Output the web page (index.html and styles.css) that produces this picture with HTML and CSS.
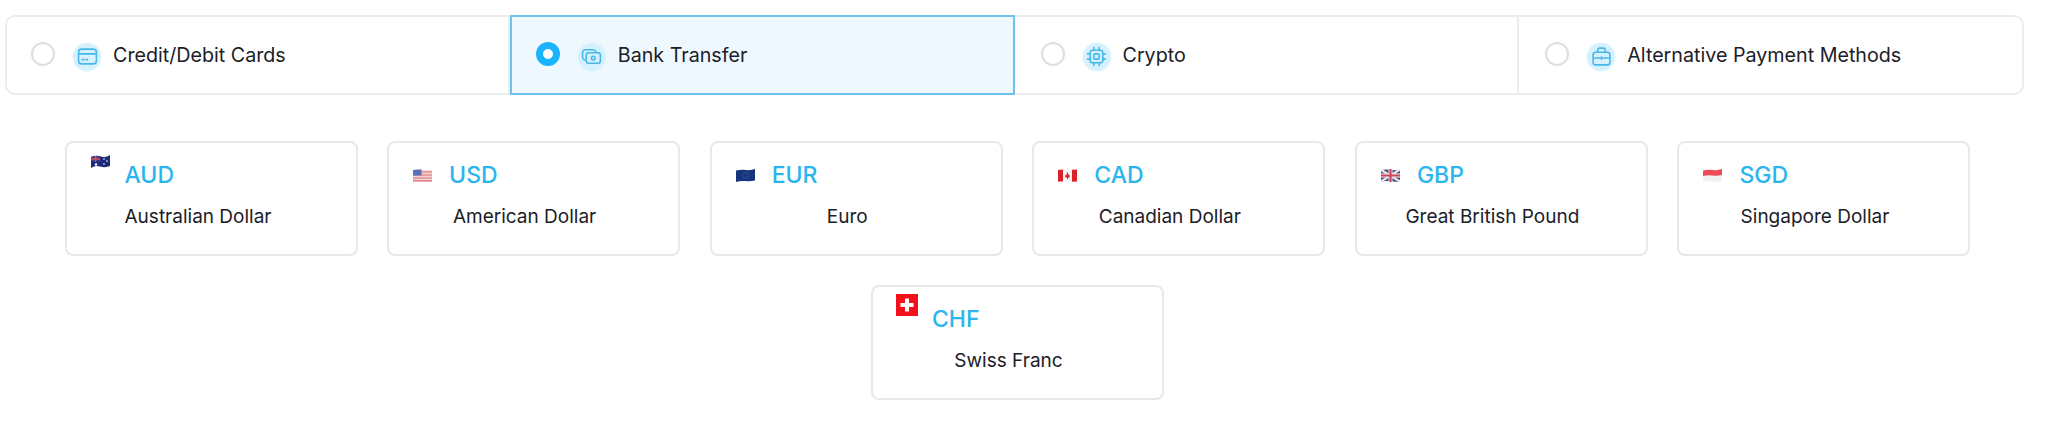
FILE: index.html
```html
<!DOCTYPE html>
<html lang="en">
<head>
  <meta charset="UTF-8">
  <meta name="viewport" content="width=device-width, initial-scale=1.0">
  <title>Payment Methods</title>
  <link rel="stylesheet" href="styles.css">
</head>
<body>
  <div class="tabs">
    <div class="tab">
      <span class="radio"></span>
      <span class="tab-icon">
        <svg viewBox="0 0 20 20" width="21" height="21"><rect x="1.500" y="3" width="17" height="14" rx="3"/><path d="M1.500 7.500h17"/><path d="M5 13h1.500M8.500 13H10"/></svg>
      </span>
      <span class="tab-label">Credit/Debit Cards</span>
    </div>
    <div class="tab tab-active">
      <span class="radio"></span>
      <span class="tab-icon">
        <svg viewBox="0 0 20 20" width="21" height="21"><path d="M3.500 13.500C2.300 13 1.500 12 1.500 10.800V6.500c0-1.700 1.300-3 3-3h7c1.300 0 2.400.8 2.800 2"/><rect x="5" y="6.500" width="13.500" height="10" rx="2.500"/><circle cx="11.700" cy="11.500" r="1.800"/></svg>
      </span>
      <span class="tab-label">Bank Transfer</span>
    </div>
    <div class="tab">
      <span class="radio"></span>
      <span class="tab-icon">
        <svg viewBox="0 0 20 20" width="21" height="21"><rect x="4" y="4" width="12" height="12" rx="2.500"/><rect x="7.500" y="7.500" width="5" height="5" rx="1"/><path d="M7.500 1.500V4M12.500 1.500V4M7.500 16v2.500M12.500 16v2.500M1.500 7.500H4M1.500 12.500H4M16 7.500h2.500M16 12.500h2.500"/></svg>
      </span>
      <span class="tab-label">Crypto</span>
    </div>
    <div class="tab">
      <span class="radio"></span>
      <span class="tab-icon">
        <svg viewBox="0 0 20 20" width="21" height="21"><rect x="2" y="6" width="16" height="12" rx="2.500"/><path d="M6.500 6V3.500c0-.8.7-1.500 1.500-1.500h4c.8 0 1.500.7 1.500 1.500V6"/><path d="M2 11.500h16M10 10.500v2"/></svg>
      </span>
      <span class="tab-label">Alternative Payment Methods</span>
    </div>
  </div>

  <div class="currencies">
    <div class="card card-aud">
      <div class="card-head">
        <span class="flag flag-top">
          <svg viewBox="0 0 19 13" width="19" height="13"><path d="M0 2Q5 0 10 1.500T19 0V11Q14 13 9 11.500T0 13Z" fill="#1b2a7a"/><path d="M0 2Q2.500 1 5 1L9 1.300V6.500H0Z" fill="#3a3f8c"/><path d="M0 4H9M4.500 1V6.500" stroke="#e34a55" stroke-width="1.500"/><circle cx="5" cy="9.500" r="1.200" fill="#fff"/><circle cx="13" cy="4" r=".8" fill="#fff"/><circle cx="16" cy="6" r=".8" fill="#fff"/><circle cx="13" cy="9" r=".8" fill="#fff"/></svg>
        </span>
        <span class="code">AUD</span>
      </div>
      <p class="name">Australian Dollar</p>
    </div>
    <div class="card">
      <div class="card-head">
        <span class="flag">
          <svg viewBox="0 0 19 13" width="19" height="13"><path d="M0 1Q5 0 10 .8T19 .5V12.500Q14 13 9 12.300T0 12.500Z" fill="#f3d5d5"/><path d="M0 3H19M0 6H19M0 9H19M0 11.800H19" stroke="#dd6a6e" stroke-width="1.200"/><path d="M0 1Q4 .3 8.500 .6V6.500H0Z" fill="#5a6fb5"/></svg>
        </span>
        <span class="code">USD</span>
      </div>
      <p class="name">American Dollar</p>
    </div>
    <div class="card">
      <div class="card-head">
        <span class="flag">
          <svg viewBox="0 0 19 13" width="19" height="13"><path d="M0 1.500Q5 .5 10 1T19 0V11.500Q14 12.500 9 12T0 13Z" fill="#16357f"/><circle cx="9.500" cy="6.500" r="3" fill="none" stroke="#33508f" stroke-width="1"/></svg>
        </span>
        <span class="code">EUR</span>
      </div>
      <p class="name">Euro</p>
    </div>
    <div class="card">
      <div class="card-head">
        <span class="flag">
          <svg viewBox="0 0 19 13" width="19" height="13"><path d="M0 1Q5 0 10 .8T19 .5V12.500Q14 13 9 12.300T0 12.500Z" fill="#f7f2f2"/><path d="M0 1L5 .4V12.500L0 12.500ZM14 .8L19 .5V12.500L14 12.800Z" fill="#d8232a"/><path d="M9.500 3L11 6.500 12 6 11.500 8.500H10V10H9V8.500H7.500L7 6 8 6.500Z" fill="#d8232a"/></svg>
        </span>
        <span class="code">CAD</span>
      </div>
      <p class="name">Canadian Dollar</p>
    </div>
    <div class="card">
      <div class="card-head">
        <span class="flag">
          <svg viewBox="0 0 19 13" width="19" height="13"><path d="M0 1Q5 0 10 .8T19 .5V12.500Q14 13 9 12.300T0 12.500Z" fill="#4a4f86"/><path d="M0 1L19 12.500M19 .5L0 12.500" stroke="#f2e6e8" stroke-width="2.200"/><path d="M9.500 0V13M0 6.500H19" stroke="#f2e6e8" stroke-width="4"/><path d="M9.500 0V13M0 6.500H19" stroke="#c9475a" stroke-width="2.200"/></svg>
        </span>
        <span class="code">GBP</span>
      </div>
      <p class="name">Great British Pound</p>
    </div>
    <div class="card">
      <div class="card-head">
        <span class="flag">
          <svg viewBox="0 0 19 13" width="19" height="13"><path d="M0 1.500Q5 .5 10 1T19 0V12Q14 13 9 12.500T0 13Z" fill="#f1f1f1"/><path d="M0 1.500Q5 .5 10 1T19 0V6Q14 7 9 6.500T0 7Z" fill="#ee4c55"/></svg>
        </span>
        <span class="code">SGD</span>
      </div>
      <p class="name">Singapore Dollar</p>
    </div>
    <div class="card">
      <div class="card-head">
        <span class="flag flag-top flag-chf">
          <svg viewBox="0 0 22 22" width="22" height="22"><rect width="22" height="22" fill="#f5111b"/><path d="M9 4.500h4V9h4.500v4H13v4.500H9V13H4.500V9H9Z" fill="#fff"/></svg>
        </span>
        <span class="code">CHF</span>
      </div>
      <p class="name">Swiss Franc</p>
    </div>
  </div>
</body>
</html>
```

FILE: styles.css
```css
* {
  margin: 0;
  padding: 0;
  box-sizing: border-box;
}

body {
  font-family: Inter, "Liberation Sans", sans-serif;
  background-color: #fff;
  color: #1b2027;
  padding: 15px 24px 0 5px;
  height: 424px;
  overflow: hidden;
}

.tabs {
  display: grid;
  grid-template-columns: repeat(4, 1fr);
  height: 80px;
}

.tab {
  display: flex;
  align-items: center;
  padding-left: 26px;
  border: 2px solid #ececec;
  border-left: none;
  background-color: #fff;
}

.tab:first-child {
  border-left: 2px solid #ececec;
  padding-left: 24px;
  border-radius: 10px 0 0 10px;
}

.tab:last-child {
  border-radius: 0 10px 10px 0;
}

.tab-active {
  background-color: #eef8fe;
  border: 2px solid #6cc5e6;
  padding-left: 24px;
}

.radio {
  width: 24px;
  height: 24px;
  margin-top: -3px;
  border: 2px solid #dfdfdf;
  border-radius: 50%;
  flex-shrink: 0;
}

.tab-active .radio {
  border: 7px solid #1bb4fb;
  background-color: #fff;
}

.tab-icon {
  display: flex;
  align-items: center;
  justify-content: center;
  width: 28px;
  height: 28px;
  margin: 3px 12px 0 18px;
  border-radius: 50%;
  background-color: #d6f1fe;
  box-shadow: 0 0 3px #e3f6fe;
  flex-shrink: 0;
}

.tab-icon svg {
  fill: none;
  stroke: #47b8e8;
  stroke-width: 1.5;
  stroke-linecap: round;
  stroke-linejoin: round;
}

.tab-label {
  font-size: 19.7px;
}

.currencies {
  display: flex;
  flex-wrap: wrap;
  justify-content: center;
  column-gap: 29.6px;
  row-gap: 29px;
  margin: 46px -1px 0 0;
  padding-left: 5px;
}

.card {
  width: 293px;
  height: 115px;
  padding-top: 14px;
  border: 2px solid #e8e8e8;
  border-radius: 8px;
  background-color: #fff;
}

.card-head {
  display: flex;
  align-items: center;
  height: 36px;
  padding-left: 24px;
}

.flag {
  display: flex;
  width: 19px;
  margin-right: 17px;
  flex-shrink: 0;
}

.flag-top {
  align-self: flex-start;
  margin-top: -2px;
}

.flag-chf {
  width: 22px;
  margin: -7px 14px 0 -1px;
}

.code {
  font-size: 23px;
  font-weight: 500;
  color: #2ab5ee;
}

.card-aud .flag {
  margin-right: 15px;
}

.name {
  margin-top: 6px;
  padding-right: 18px;
  font-size: 19px;
  line-height: 36px;
  text-align: center;
}

.card-aud .name {
  padding-right: 26px;
}
```
